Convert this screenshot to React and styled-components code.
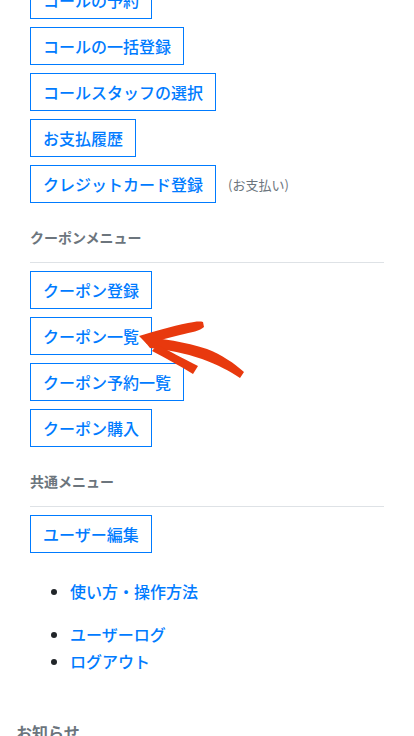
import React from 'react';
import styled, { createGlobalStyle } from 'styled-components';

const GlobalStyle = createGlobalStyle`
  * {
    box-sizing: border-box;
  }
  body {
    margin: 0;
    background: #fff;
    font-family: "Noto Sans CJK JP", "Noto Sans", sans-serif;
    color: #212529;
  }
`;

const callMenu = ['コールの予約', 'コールの一括登録', 'コールスタッフの選択', 'お支払履歴'];
const couponMenu = ['クーポン登録', 'クーポン一覧', 'クーポン予約一覧', 'クーポン購入'];

// hand-drawn red pointer over the coupon list
const Arrow = () => (
  <ArrowMark viewBox="0 0 120 80" width="120" height="80">
    <path d="M9,26 C22,22 42,16 58,13 C64,12 69,11 73,12 L74,17 C70,21 62,22 50,25 C38,28 26,31 17,34 Z" />
    <path d="M11,27 C32,28 55,32 77,39 C92,45 104,53 114,62 L110,68 C100,61 88,55 72,49 C55,43 38,40 20,38 Z" />
    <path d="M27,35 C38,40 52,48 68,56 L63,64 C50,56 36,48 22,41 Z" />
  </ArrowMark>
);

const App = () => (
  <>
    <GlobalStyle />
    <Page>
      <Menu>
        {callMenu.map((label) => (
          <Row key={label}>
            <MenuButton>{label}</MenuButton>
          </Row>
        ))}
        <Row>
          <MenuButton>クレジットカード登録</MenuButton>
          <Note>(お支払い)</Note>
        </Row>

        <Heading>クーポンメニュー</Heading>
        <Divider />
        {couponMenu.map((label) => (
          <Row key={label}>
            <MenuButton>{label}</MenuButton>
          </Row>
        ))}

        <Heading>共通メニュー</Heading>
        <Divider />
        <Row>
          <MenuButton>ユーザー編集</MenuButton>
        </Row>

        <LinkList $top={25}>
          <li><LinkText>使い方・操作方法</LinkText></li>
        </LinkList>
        <LinkList $top={16}>
          <li><LinkText>ユーザーログ</LinkText></li>
          <li><LinkText>ログアウト</LinkText></li>
        </LinkList>
      </Menu>
      <Notice>お知らせ</Notice>
      <Arrow />
    </Page>
  </>
);

export default App;

const Page = styled.div`
  position: relative;
  margin-top: -19px;
  padding: 0 16px 40px;
`;

const Menu = styled.div`
  padding: 0 14px;
`;

const Row = styled.div`
  display: flex;
  align-items: center;
  margin-bottom: 8px;
`;

const MenuButton = styled.button`
  height: 38px;
  padding: 6px 12px;
  border: 1px solid #007bff;
  border-radius: 0;
  background: #fff;
  color: #007bff;
  font-family: inherit;
  font-size: 16px;
  font-weight: 500;
  line-height: 24px;
  white-space: nowrap;
  cursor: pointer;
`;

const Note = styled.span`
  margin-left: 12px;
  font-size: 13px;
  color: #6c757d;
`;

const Heading = styled.h6`
  margin: 24px 0 0;
  font-size: 14px;
  line-height: 21px;
  font-weight: 700;
  color: #6c757d;
`;

const Divider = styled.hr`
  margin: 14px 0 8px;
  border: 0;
  border-top: 1px solid #dee2e6;
`;

const LinkList = styled.ul`
  margin: ${({ $top }) => $top}px 0 0;
  padding-left: 40px;
  list-style: disc;

  li {
    font-size: 16px;
    font-weight: 500;
    line-height: 27px;
  }
`;

const LinkText = styled.a`
  color: #007bff;
  text-decoration: none;
`;

const Notice = styled.h5`
  margin: 45px 0 0;
  font-size: 16px;
  line-height: 24px;
  font-weight: 700;
  color: #6c757d;
`;

const ArrowMark = styled.svg`
  position: absolute;
  left: 130px;
  top: 329px;
  fill: #e8390e;
`;
